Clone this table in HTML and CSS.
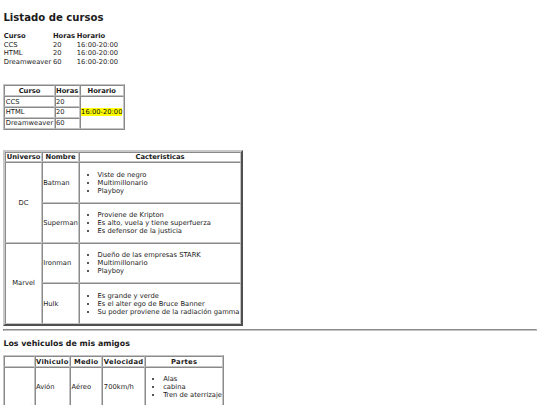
FILE: index.html
```html
<!DOCTYPE html>
<html lang="es">
<head>
<meta charset="utf-8">
<title>Listado de cursos</title>
<link rel="stylesheet" href="styles.css">
</head>
<body>
<h2>Listado de cursos</h2>
<table class="plain">
  <tr><th>Curso</th><th>Horas</th><th>Horario</th></tr>
  <tr><td>CCS</td><td>20</td><td>16:00-20:00</td></tr>
  <tr><td>HTML</td><td>20</td><td>16:00-20:00</td></tr>
  <tr><td>Dreamweaver</td><td>60</td><td>16:00-20:00</td></tr>
</table>

<table class="grid t2">
  <tr><th>Curso</th><th>Horas</th><th>Horario</th></tr>
  <tr><td>CCS</td><td>20</td><td rowspan="3"><mark>16:00-20:00</mark></td></tr>
  <tr><td>HTML</td><td>20</td></tr>
  <tr><td>Dreamweaver</td><td>60</td></tr>
</table>

<table class="grid heroes">
  <tr><th>Universo</th><th>Nombre</th><th>Cacteristicas</th></tr>
  <tr>
    <td rowspan="2" class="center">DC</td>
    <td>Batman</td>
    <td><ul><li>Viste de negro</li><li>Multimillonario</li><li>Playboy</li></ul></td>
  </tr>
  <tr>
    <td>Superman</td>
    <td><ul><li>Proviene de Kripton</li><li>Es alto, vuela y tiene superfuerza</li><li>Es defensor de la justicia</li></ul></td>
  </tr>
  <tr>
    <td rowspan="2" class="center">Marvel</td>
    <td>Ironman</td>
    <td><ul><li>Dueño de las empresas STARK</li><li>Multimillonario</li><li>Playboy</li></ul></td>
  </tr>
  <tr>
    <td>Hulk</td>
    <td><ul><li>Es grande y verde</li><li>Es el alter ego de Bruce Banner</li><li>Su poder proviene de la radiación gamma</li></ul></td>
  </tr>
</table>

<hr class="rule">

<h3>Los vehiculos de mis amigos</h3>
<table class="grid cars">
  <tr><th></th><th>Vihiculo</th><th>Medio</th><th>Velocidad</th><th>Partes</th></tr>
  <tr>
    <th rowspan="2">Miguel</th>
    <td>Avión</td>
    <td>Aéreo</td>
    <td>700km/h</td>
    <td><ul><li>Alas</li><li>cabina</li><li>Tren de aterrizaje</li></ul></td>
  </tr>
  <tr>
    <td>Coche</td>
    <td>Terrestre</td>
    <td>200km/h</td>
    <td><ul><li>Ruedas</li><li>Motor</li><li>Volante</li></ul></td>
  </tr>
</table>
</body>
</html>
```
FILE: styles.css
```css
html {
  zoom: 0.421875;
}
body {
  margin: 8px;
  font-family: "DejaVu Sans", Verdana, sans-serif;
  font-size: 16px;
  color: #1a1a1a;
  background: #fff;
}
h2 {
  font-size: 24px;
  margin: 20px 0;
}
h3 {
  font-size: 18.7px;
  margin: 18px 0;
}
table {
  border-collapse: separate;
  border-spacing: 2px;
}
.plain th {
  text-align: left;
}
.plain th, .plain td {
  padding: 1px 3px 1px 1px;
}
.grid {
  border: 1px solid;
  border-color: #c4c4c4 #8a8a8a #8a8a8a #c4c4c4;
}
.grid th, .grid td {
  border: 1px solid;
  border-color: #8a8a8a #c4c4c4 #c4c4c4 #8a8a8a;
  padding: 1px;
}
.t2 {
  margin-top: 42px;
}
.heroes {
  margin-top: 47px;
  border-width: 5px;
  border-color: #c8c8c8 #505050 #505050 #c8c8c8;
}
.cars th {
  letter-spacing: 0.7px;
}
.center {
  text-align: center;
}
ul {
  margin: 16px 0;
  padding-left: 40px;
}
mark {
  background: #ffff00;
  color: #000;
}
hr.rule {
  margin: 8px 0;
  border: 1px solid;
  border-color: #8a8a8a #c4c4c4 #c4c4c4 #8a8a8a;
}
```
